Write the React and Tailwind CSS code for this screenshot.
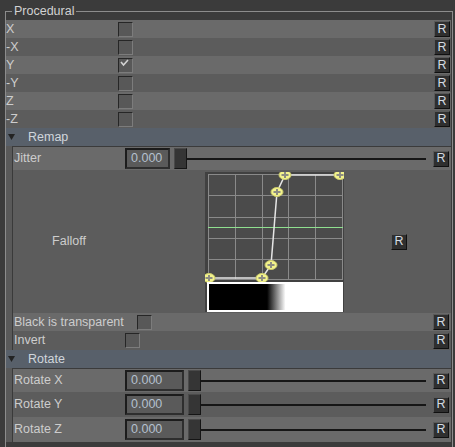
import React from 'react'

const rowLight = 'bg-[#6a6a6a]'
const rowDark = 'bg-[#5c5c5c]'

function Check({ checked }) {
  return (
    <div className="w-[15px] h-[15px] shrink-0 bg-[#585858] border border-t-[#262626] border-l-[#262626] border-r-[#7c7c7c] border-b-[#7c7c7c]">
      {checked && (
        <svg width="13" height="13" viewBox="0 0 13 13">
          <polyline points="2,3 4.5,6 9,1" fill="none" stroke="#d2d2d2" strokeWidth="1.6" />
        </svg>
      )}
    </div>
  )
}

function RBtn({ className = '' }) {
  return (
    <div className={`w-[16px] h-[16px] shrink-0 flex items-center justify-center bg-[#2f2f2f] border border-t-[#5a5a5a] border-l-[#5a5a5a] border-r-[#101010] border-b-[#101010] text-[12.5px] leading-none text-[#d3dbe2] ${className}`}>
      R
    </div>
  )
}

function Tri() {
  return (
    <svg width="7" height="6" viewBox="0 0 7 6" className="ml-[2px] shrink-0">
      <polygon points="0,0 7,0 3.5,6" fill="#232323" />
    </svg>
  )
}

function Header({ title }) {
  return (
    <div className="flex items-center h-[18px] bg-[#58606a] text-[#d0d6dc]">
      <Tri />
      <span className="ml-[13px]">{title}</span>
    </div>
  )
}

function SliderRow({ label, inputW, h, bg }) {
  return (
    <div className={`flex items-center ${h} ${bg} pr-[2px]`}>
      <span className="w-[112px] shrink-0 pl-px">{label}</span>
      <div className={`${inputW} h-[21px] shrink-0 flex items-center pl-[4px] bg-[#5a5a5a] border-2 border-t-[#1c1c1c] border-l-[#1c1c1c] border-r-[#2e2e2e] border-b-[#2e2e2e] text-[#b4c0ce]`}>
        0.000
      </div>
      <div className="ml-[4px] w-[13px] h-[21px] shrink-0 bg-[#353535] border border-t-[#4a4a4a] border-l-[#4a4a4a] border-r-[#151515] border-b-[#151515]" />
      <div className="flex-1 h-[2px] bg-[#161616]" />
      <RBtn className="ml-[7px]" />
    </div>
  )
}

function Section({ children }) {
  return (
    <div className="flex">
      <div className="w-[6px] shrink-0 bg-[#595959]" />
      <div className="w-px shrink-0 bg-[#3a3a3a]" />
      <div className="flex-1 flex flex-col pt-px bg-[#3b3b3b]">{children}</div>
    </div>
  )
}

function Graph() {
  const vx = [3.5, 30.5, 57.5, 83.5, 110.5, 137.5]
  const hy = [2.5, 23.5, 45.5, 66.5, 87.5, 107.5]
  const pts = [[4, 106], [57, 106], [66, 93], [72, 20], [80, 3], [135, 3]]
  return (
    <svg width="139" height="140" viewBox="0 0 139 140" className="shrink-0">
      <defs>
        <linearGradient id="fall" x1="0" x2="1" y1="0" y2="0">
          <stop offset="0" stopColor="#000" />
          <stop offset="0.44" stopColor="#000" />
          <stop offset="0.58" stopColor="#fff" />
          <stop offset="1" stopColor="#fff" />
        </linearGradient>
      </defs>
      <rect width="139" height="140" fill="#414141" />
      <rect x="3" y="2" width="134" height="105" fill="#4b4b4b" />
      {vx.map((x) => (
        <line key={'v' + x} x1={x} x2={x} y1="2" y2="108" stroke="#8a8a8a" strokeWidth="1" />
      ))}
      {hy.map((y) => (
        <line key={'h' + y} x1="3" x2="138" y1={y} y2={y} stroke="#8a8a8a" strokeWidth="1" />
      ))}
      <line x1="3" x2="138" y1="55.5" y2="55.5" stroke="#8fe08f" strokeWidth="1" />
      <polyline points={pts.map((p) => p.join(',')).join(' ')} fill="none" stroke="#e6e6e6" strokeWidth="1.5" />
      {pts.map(([x, y]) => (
        <g key={x + '-' + y}>
          <ellipse cx={x} cy={y} rx="6" ry="4.5" fill="#f3f38c" stroke="#c9c96c" strokeWidth="1" />
          <line x1={x - 3.5} x2={x + 3.5} y1={y} y2={y} stroke="#8d8d82" strokeWidth="2" />
          <line x1={x} x2={x} y1={y - 3} y2={y + 3} stroke="#8d8d82" strokeWidth="2" />
        </g>
      ))}
      <rect x="2" y="110" width="136" height="30" fill="#fff" />
      <rect x="4" y="112" width="132" height="26" fill="url(#fall)" />
    </svg>
  )
}

export default function App() {
  const axes = ['X', '-X', 'Y', '-Y', 'Z', '-Z']
  return (
    <div className="w-[455px] h-[447px] overflow-hidden bg-[#3b3b3b] pl-[5px] font-['Liberation_Sans',Arial,sans-serif] text-[12.5px] text-[#cdcdcd]">
      <fieldset className="mt-[3px] w-[448px] h-[470px] border-x border-t border-[#8c8c8c] pr-px pt-px">
        <legend className="ml-[6px] px-[2px] h-[16px] leading-[16px] text-[#d2d2d2]">Procedural</legend>

        {axes.map((a, i) => (
          <div key={a} className={`flex items-center h-[18px] ${i % 2 ? rowDark : rowLight}`}>
            <span className="w-[112px] shrink-0">{a}</span>
            <Check checked={a === 'Y'} />
            <div className="flex-1" />
            <RBtn className="mr-px" />
          </div>
        ))}

        <Header title="Remap" />
        <Section>
          <SliderRow label="Jitter" inputW="w-[45px]" h="h-[23px]" bg={rowLight} />
          <div className={`flex items-center h-[143px] ${rowDark}`}>
            <span className="w-[112px] shrink-0 text-center">Falloff</span>
            <div className="ml-[80px]">
              <Graph />
            </div>
            <RBtn className="ml-[47px]" />
          </div>
          <div className={`flex items-center h-[18px] ${rowLight} pr-[2px]`}>
            <span className="w-[124px] shrink-0 pl-px">Black is transparent</span>
            <Check />
            <div className="flex-1" />
            <RBtn />
          </div>
          <div className={`flex items-center h-[19px] ${rowDark} pr-[2px]`}>
            <span className="w-[112px] shrink-0 pl-px">Invert</span>
            <Check />
            <div className="flex-1" />
            <RBtn />
          </div>
        </Section>

        <Header title="Rotate" />
        <Section>
          <SliderRow label="Rotate X" inputW="w-[59px]" h="h-[23px]" bg={rowLight} />
          <SliderRow label="Rotate Y" inputW="w-[59px]" h="h-[25px]" bg={rowDark} />
          <SliderRow label="Rotate Z" inputW="w-[59px]" h="h-[25px]" bg={rowLight} />
        </Section>
      </fieldset>
    </div>
  )
}
